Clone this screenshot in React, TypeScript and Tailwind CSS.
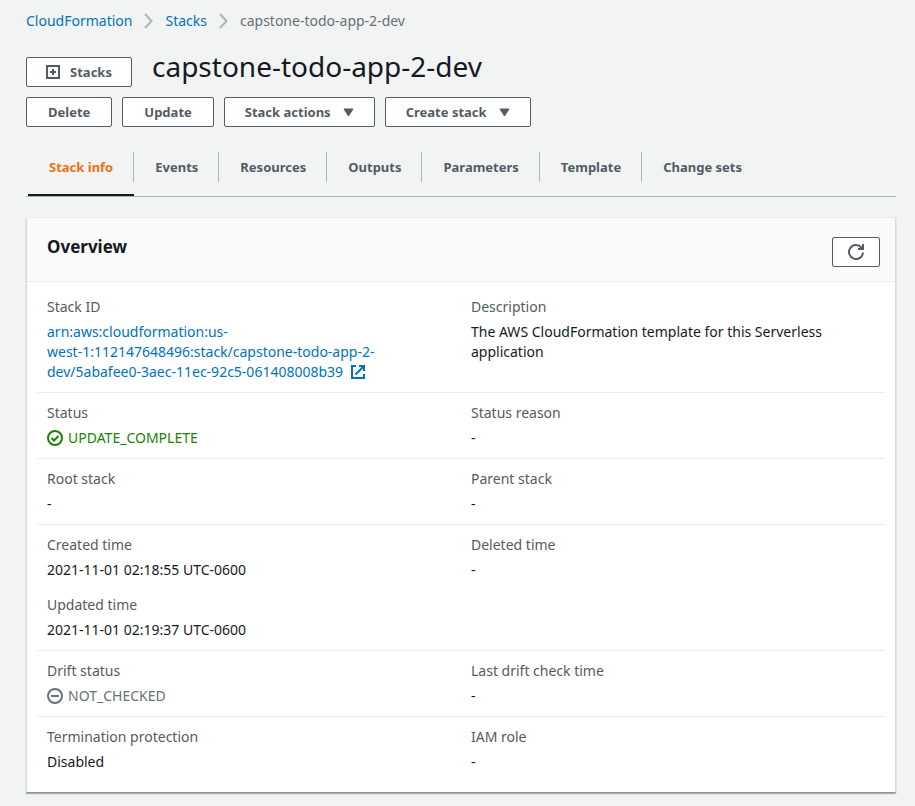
import type { ReactNode } from "react";

const buttonClass =
  "flex h-[30px] items-center justify-center rounded-xs border border-[#545b64] bg-white text-[13px] leading-5 font-bold whitespace-nowrap text-[#545b64]";

function Chevron() {
  return (
    <svg className="mx-3 shrink-0" width="9" height="16" viewBox="0 0 9 16" fill="none" stroke="#aab7b8" strokeWidth="2" aria-hidden="true">
      <path d="M1 1l6.500 7L1 15" />
    </svg>
  );
}

function Caret() {
  return (
    <svg className="ml-3 shrink-0" width="11" height="9" viewBox="0 0 11 9" fill="#545b64" stroke="#545b64" strokeLinejoin="round" aria-hidden="true">
      <path d="M1 1h9l-4.500 7z" />
    </svg>
  );
}

function ExternalIcon() {
  return (
    <svg className="ml-2 inline-block align-[-2px]" width="14" height="14" viewBox="0 0 14 14" fill="none" stroke="currentColor" strokeWidth="2" aria-hidden="true">
      <path d="M5 1H1v12h12V9" />
      <path d="M8 1h5v5" />
      <path d="M13 1L4.500 9.500" />
    </svg>
  );
}

function CheckIcon() {
  return (
    <svg className="shrink-0" width="16" height="16" viewBox="0 0 16 16" fill="none" stroke="currentColor" strokeWidth="2" aria-hidden="true">
      <circle cx="8" cy="8" r="7" />
      <path d="M4.500 8l2.500 2.500L11.500 6" />
    </svg>
  );
}

function MinusIcon() {
  return (
    <svg className="shrink-0" width="16" height="16" viewBox="0 0 16 16" fill="none" stroke="currentColor" strokeWidth="2" aria-hidden="true">
      <circle cx="8" cy="8" r="7" />
      <path d="M4 8h8" />
    </svg>
  );
}

function Field({ label, children }: { label: string; children: ReactNode }) {
  return (
    <div>
      <dt className="text-[#545b64]">{label}</dt>
      <dd className="mt-[5px]">{children}</dd>
    </div>
  );
}

function Row({ left, right }: { left: ReactNode; right: ReactNode }) {
  return (
    <dl className="grid grid-cols-2 border-b border-[#eaeded] py-2.5 last:border-b-0">
      <div className="flex flex-col gap-[15px] px-2.5">{left}</div>
      <div className="px-2.5">{right}</div>
    </dl>
  );
}

const tabs = ["Stack info", "Events", "Resources", "Outputs", "Parameters", "Template", "Change sets"];

export default function App() {
  return (
    <div className="min-h-screen bg-[#f2f3f3] pt-[11px] pr-[19px] pb-[13px] pl-[26px] font-['Noto_Sans',sans-serif] text-[14px] leading-5 text-[#16191f]">
      <nav aria-label="Breadcrumb" className="flex items-center">
        <a href="#cloudformation" className="text-[#0073bb]">CloudFormation</a>
        <Chevron />
        <a href="#stacks" className="text-[#0073bb]">Stacks</a>
        <Chevron />
        <span className="text-[#687078]">capstone-todo-app-2-dev</span>
      </nav>

      <header className="mt-[19px]">
        <div className="flex h-[37px] items-end gap-5">
          <button type="button" className={buttonClass + " min-w-[106px] px-4"}>
            <svg className="mr-2.5 shrink-0" width="14" height="14" viewBox="0 0 14 14" fill="none" stroke="#545b64" strokeWidth="2" aria-hidden="true">
              <path d="M1 1h12v12H1zM4 7h6M7 4v6" />
            </svg>
            Stacks
          </button>
          <h1 className="self-start text-[28px] leading-8">capstone-todo-app-2-dev</h1>
        </div>
        <div className="mt-2.5 flex gap-2.5">
          <button type="button" className={buttonClass + " px-[21px]"}>Delete</button>
          <button type="button" className={buttonClass + " px-[21px]"}>Update</button>
          <button type="button" className={buttonClass + " px-5"}>Stack actions<Caret /></button>
          <button type="button" className={buttonClass + " px-5"}>Create stack<Caret /></button>
        </div>
      </header>

      <div role="tablist" className="mt-[25px] flex border-b border-[#aab7b8] pl-0.5">
        {tabs.map((tab, i) => (
          <button
            key={tab}
            type="button"
            role="tab"
            aria-selected={i === 0}
            className={
              "flex border-b-2 pb-3 text-[13px] leading-[30px] font-bold whitespace-nowrap " +
              (i === 0 ? "border-[#16191f] text-[#ec7211]" : "border-transparent text-[#545b64]")
            }
          >
            <span className={"pr-5 pl-[21px] " + (i < tabs.length - 1 ? "border-r border-[#aab7b8]" : "")}>{tab}</span>
          </button>
        ))}
      </div>

      <section className="mt-5 border border-t-[#eaeded] border-r-[#d5dbdb] border-b-[#879596] border-l-[#d5dbdb] bg-white shadow-[0_1px_1px_0_rgba(0,28,36,0.3)]">
        <div className="flex h-16 items-start justify-between border-b border-[#eaeded] bg-[#fafafa] pr-[15px] pl-5">
          <h2 className="mt-[18px] text-[17px] leading-[22px] font-bold">Overview</h2>
          <button type="button" aria-label="Refresh" className={buttonClass + " mt-[19px] w-12"}>
            <svg className="shrink-0" width="16" height="16" viewBox="0 0 16 16" fill="none" stroke="#545b64" strokeWidth="2" aria-hidden="true">
              <path d="M15 8.500A7 7 0 1 1 13.200 3.300L15 5" />
              <path d="M15 0v5H10" />
              <path d="M15 1.500V5h-4z" fill="#545b64" stroke="none" />
            </svg>
          </button>
        </div>
        <div className="px-2.5 pt-[5px] pb-2.5">
          <Row
            left={
              <Field label="Stack ID">
                <a href="#stack-arn" className="text-[#0073bb]">
                  arn:aws:cloudformation:us-
                  <br />
                  west-1:112147648496:stack/capstone-todo-app-2-
                  <br />
                  dev/5abafee0-3aec-11ec-92c5-061408008b39
                  <ExternalIcon />
                </a>
              </Field>
            }
            right={
              <Field label="Description">
                <span className="block max-w-[370px]">The AWS CloudFormation template for this Serverless application</span>
              </Field>
            }
          />
          <Row
            left={
              <Field label="Status">
                <span className="flex items-center gap-[5px] text-[#1d8102]"><CheckIcon />UPDATE_COMPLETE</span>
              </Field>
            }
            right={<Field label="Status reason">-</Field>}
          />
          <Row left={<Field label="Root stack">-</Field>} right={<Field label="Parent stack">-</Field>} />
          <Row
            left={
              <>
                <Field label="Created time">2021-11-01 02:18:55 UTC-0600</Field>
                <Field label="Updated time">2021-11-01 02:19:37 UTC-0600</Field>
              </>
            }
            right={<Field label="Deleted time">-</Field>}
          />
          <Row
            left={
              <Field label="Drift status">
                <span className="flex items-center gap-[5px] text-[#687078]"><MinusIcon />NOT_CHECKED</span>
              </Field>
            }
            right={<Field label="Last drift check time">-</Field>}
          />
          <Row left={<Field label="Termination protection">Disabled</Field>} right={<Field label="IAM role">-</Field>} />
        </div>
      </section>
    </div>
  );
}
